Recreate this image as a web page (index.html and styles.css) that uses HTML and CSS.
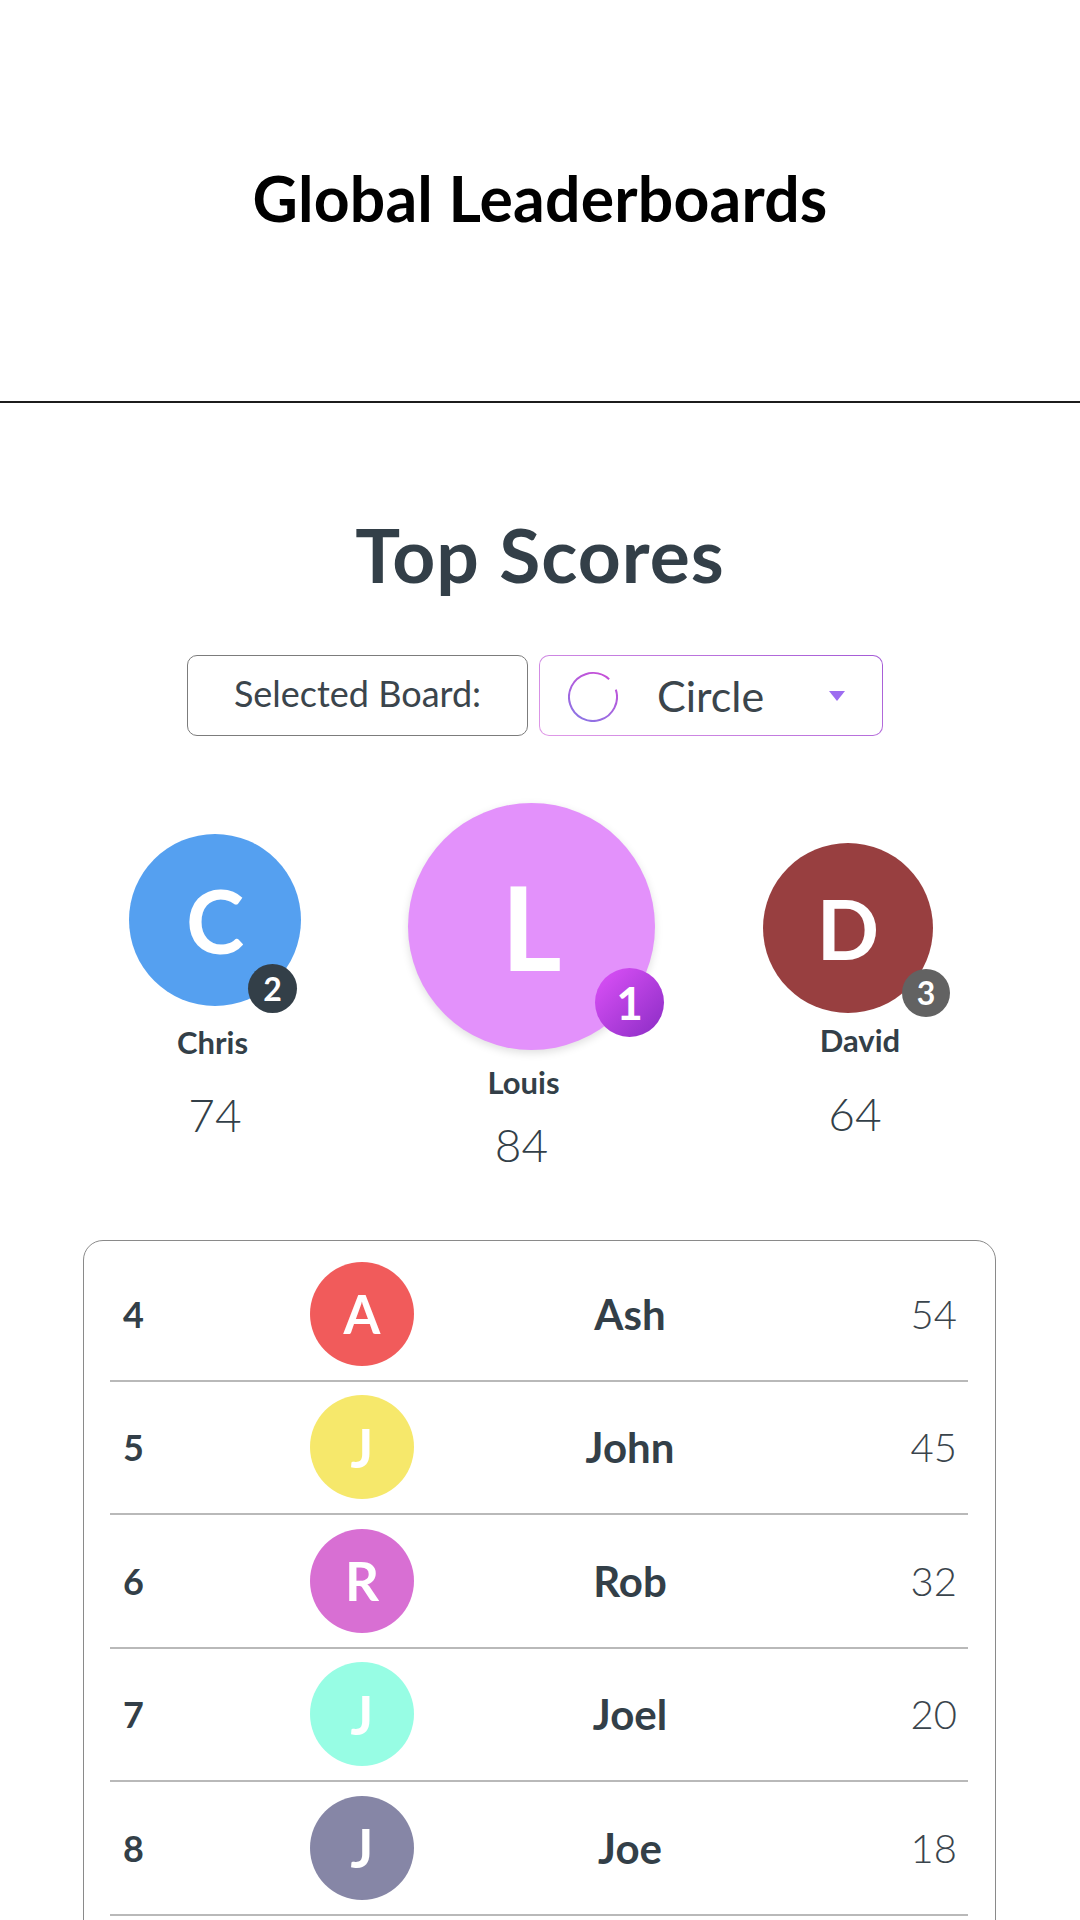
FILE: index.html
```html
<!DOCTYPE html>
<html lang="en">
<head>
<meta charset="utf-8">
<title>Global Leaderboards</title>
<link rel="stylesheet" href="styles.css">
</head>
<body>
<header class="topbar">
  <h1 class="title">Global Leaderboards</h1>
</header>
<main class="content">
  <h2 class="section-title">Top Scores</h2>

  <div class="board-picker">
    <div class="board-label">Selected Board:</div>
    <div class="board-select">
      <svg class="board-icon" viewBox="0 0 50 50" aria-hidden="true">
        <defs>
          <linearGradient id="ringGrad" x1="1" y1="0" x2="0" y2="1">
            <stop offset="0" stop-color="#cf4ad6"/>
            <stop offset="1" stop-color="#8579e6"/>
          </linearGradient>
        </defs>
        <circle cx="25" cy="25" r="24" fill="none" stroke="url(#ringGrad)" stroke-width="2"
          stroke-dasharray="137.4 13.4" transform="rotate(-18 25 25)"/>
      </svg>
      <span class="board-name">Circle</span>
      <svg class="caret" viewBox="0 0 16 10" aria-hidden="true">
        <polygon points="0,0 16,0 8,10" fill="#9d6cf0"/>
      </svg>
    </div>
  </div>

  <div class="podium">
    <div class="podium-col podium-col--second">
      <div class="podium-avatar">C<span class="rank-badge badge-2">2</span></div>
      <div class="podium-name">Chris</div>
      <div class="podium-score">74</div>
    </div>
    <div class="podium-col podium-col--first">
      <div class="podium-avatar">L<span class="rank-badge badge-1">1</span></div>
      <div class="podium-name">Louis</div>
      <div class="podium-score">84</div>
    </div>
    <div class="podium-col podium-col--third">
      <div class="podium-avatar">D<span class="rank-badge badge-3">3</span></div>
      <div class="podium-name">David</div>
      <div class="podium-score">64</div>
    </div>
  </div>

  <div class="ranking-card">
    <div class="rank-row">
      <span class="rank-pos">4</span>
      <span class="rank-avatar avatar-red">A</span>
      <span class="rank-name">Ash</span>
      <span class="rank-score">54</span>
    </div>
    <div class="rank-row">
      <span class="rank-pos">5</span>
      <span class="rank-avatar avatar-yellow">J</span>
      <span class="rank-name">John</span>
      <span class="rank-score">45</span>
    </div>
    <div class="rank-row">
      <span class="rank-pos">6</span>
      <span class="rank-avatar avatar-pink">R</span>
      <span class="rank-name">Rob</span>
      <span class="rank-score">32</span>
    </div>
    <div class="rank-row">
      <span class="rank-pos">7</span>
      <span class="rank-avatar avatar-mint">J</span>
      <span class="rank-name">Joel</span>
      <span class="rank-score">20</span>
    </div>
    <div class="rank-row">
      <span class="rank-pos">8</span>
      <span class="rank-avatar avatar-slate">J</span>
      <span class="rank-name">Joe</span>
      <span class="rank-score">18</span>
    </div>
  </div>
</main>
</body>
</html>
```
FILE: styles.css
```css
html, body {
  margin: 0;
  padding: 0;
  background: #ffffff;
}

body {
  font-family: Lato, "Open Sans", "Liberation Sans", sans-serif;
  color: #333f48;
}

/* Header */
.topbar {
  height: 403px;
  box-sizing: border-box;
  border-bottom: 2px solid #1c1c1c;
  padding-bottom: 4px;
  display: flex;
  align-items: center;
  justify-content: center;
}

.title {
  margin: 0;
  font-size: 62.5px;
  line-height: 1;
  font-weight: 700;
  letter-spacing: 0.2px;
  color: #000000;
}

/* Section title */
.section-title {
  margin: 114px 0 0;
  text-align: center;
  font-size: 75px;
  line-height: 1;
  font-weight: 700;
  letter-spacing: 1px;
  color: #333f48;
}

/* Board picker */
.board-picker {
  display: flex;
  justify-content: center;
  gap: 11px;
  margin-top: 63px;
  padding-right: 10px;
}

.board-label {
  width: 341px;
  height: 81px;
  box-sizing: border-box;
  border: 1.5px solid #7c7c7c;
  border-radius: 10px;
  padding-bottom: 5px;
  display: flex;
  align-items: center;
  justify-content: center;
  font-size: 36px;
  color: #3b454c;
}

.board-select {
  width: 344px;
  height: 81px;
  box-sizing: border-box;
  border: 1.5px solid transparent;
  border-radius: 10px;
  background:
    linear-gradient(#ffffff, #ffffff) padding-box,
    linear-gradient(30deg, #e09ae8, #a45bd6) border-box;
  display: flex;
  align-items: center;
  padding: 0 37px 0 28px;
}

.board-icon {
  width: 50px;
  height: 50px;
  flex: none;
  margin-top: 3px;
}

.board-name {
  flex: 1;
  margin-left: 39px;
  font-size: 43px;
  color: #3b454c;
}

.caret {
  width: 16px;
  height: 10px;
  flex: none;
}

/* Podium */
.podium {
  display: grid;
  grid-template-columns: repeat(3, 300px);
  column-gap: 16.5px;
  padding-left: 65px;
  margin-top: 67px;
}

.podium-col {
  display: flex;
  flex-direction: column;
  align-items: center;
}

.podium-avatar {
  position: relative;
  border-radius: 50%;
  display: flex;
  align-items: center;
  justify-content: center;
  color: #ffffff;
  font-weight: 700;
  line-height: 1;
}

.podium-name {
  font-size: 31px;
  line-height: 1;
  font-weight: 700;
  color: #333f48;
}

.podium-score {
  font-size: 46px;
  line-height: 1;
  font-weight: 300;
  color: #333f48;
}

.podium-col--second .podium-avatar {
  width: 172px;
  height: 172px;
  margin-top: 31px;
  background: #55a0f0;
  font-size: 88px;
}
.podium-col--second .podium-name { margin-top: 20.5px; margin-right: 5px; }
.podium-col--second .podium-score { margin-top: 34.5px; }

.podium-col--first .podium-avatar {
  width: 247px;
  height: 247px;
  background: #e391fb;
  font-size: 116px;
  box-shadow: 0 3px 9px rgba(0, 0, 0, 0.13);
}
.podium-col--first .podium-name { margin-top: 16.5px; margin-right: 16px; }
.podium-col--first .podium-score { margin-top: 24.5px; margin-right: 20px; }

.podium-col--third .podium-avatar {
  width: 170px;
  height: 170px;
  margin-top: 40px;
  background: #983f40;
  font-size: 82px;
}
.podium-col--third .podium-name { margin-top: 11.5px; margin-left: 24px; }
.podium-col--third .podium-score { margin-top: 35.5px; margin-left: 14px; }

.rank-badge {
  position: absolute;
  border-radius: 50%;
  display: flex;
  align-items: center;
  justify-content: center;
  color: #ffffff;
  font-weight: 700;
  line-height: 1;
}

.badge-2 {
  width: 49px;
  height: 49px;
  right: 4px;
  bottom: -7px;
  background: #333f48;
  font-size: 32px;
}

.badge-1 {
  width: 69px;
  height: 69px;
  right: -9px;
  bottom: 13px;
  background: linear-gradient(135deg, #de52f9, #8a2cc4);
  font-size: 46px;
}

.badge-3 {
  width: 48px;
  height: 48px;
  right: -17px;
  bottom: -4px;
  background: #626262;
  font-size: 32px;
}

/* Ranking list */
.ranking-card {
  margin: 72px 0 0 83px;
  width: 913px;
  box-sizing: border-box;
  border: 1px solid #8a8a8a;
  border-radius: 20px;
  padding: 7px 27px 60px 26px;
}

.rank-row {
  display: grid;
  grid-template-columns: 200px 104px 1fr 122px;
  align-items: center;
  height: 133.5px;
  box-sizing: border-box;
  border-bottom: 2px solid #b9b9b9;
}

.rank-pos {
  padding-left: 13px;
  font-size: 36px;
  font-weight: 700;
  color: #333f48;
}

.rank-avatar {
  width: 104px;
  height: 104px;
  border-radius: 50%;
  display: flex;
  align-items: center;
  justify-content: center;
  color: #ffffff;
  font-size: 53px;
  font-weight: 700;
  line-height: 1;
}

.avatar-red { background: #f15b5b; }
.avatar-yellow { background: #f6e86b; }
.avatar-pink { background: #d86fd3; }
.avatar-mint { background: #97fde4; }
.avatar-slate { background: #8686a6; }

.rank-name {
  text-align: center;
  font-size: 42px;
  font-weight: 700;
  color: #333f48;
}

.rank-score {
  text-align: right;
  padding-right: 11px;
  font-size: 40px;
  font-weight: 300;
  color: #3a444c;
}
```
